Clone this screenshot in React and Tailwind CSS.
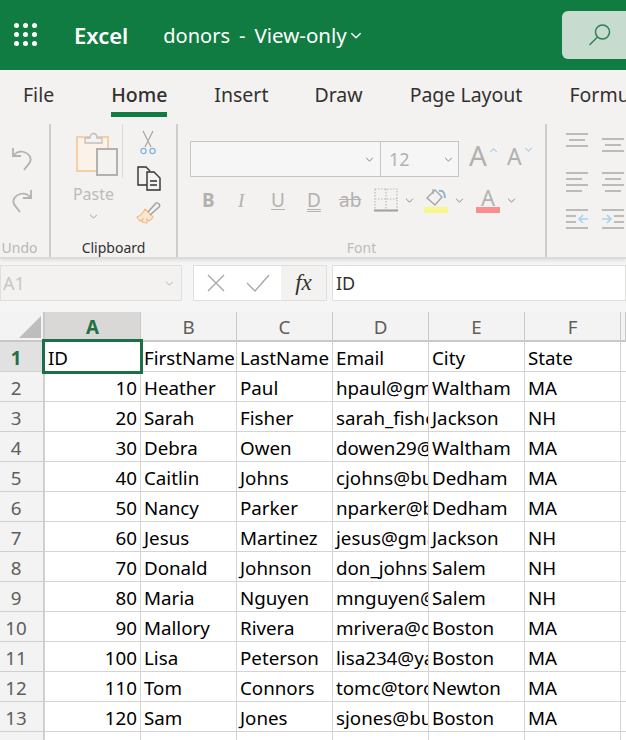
import React from 'react';

const font = { fontFamily: '"Noto Sans", "Open Sans", sans-serif' };

const rows = [
  ['ID', 'FirstName', 'LastName', 'Email', 'City', 'State'],
  [10, 'Heather', 'Paul', 'hpaul@gmail.com', 'Waltham', 'MA'],
  [20, 'Sarah', 'Fisher', 'sarah_fisher@aol.com', 'Jackson', 'NH'],
  [30, 'Debra', 'Owen', 'dowen29@gmail.com', 'Waltham', 'MA'],
  [40, 'Caitlin', 'Johns', 'cjohns@bu.edu', 'Dedham', 'MA'],
  [50, 'Nancy', 'Parker', 'nparker@bu.edu', 'Dedham', 'MA'],
  [60, 'Jesus', 'Martinez', 'jesus@gmail.com', 'Jackson', 'NH'],
  [70, 'Donald', 'Johnson', 'don_johnson@aol.com', 'Salem', 'NH'],
  [80, 'Maria', 'Nguyen', 'mnguyen@gmail.com', 'Salem', 'NH'],
  [90, 'Mallory', 'Rivera', 'mrivera@comcast.net', 'Boston', 'MA'],
  [100, 'Lisa', 'Peterson', 'lisa234@yahoo.com', 'Boston', 'MA'],
  [110, 'Tom', 'Connors', 'tomc@torch.com', 'Newton', 'MA'],
  [120, 'Sam', 'Jones', 'sjones@bu.edu', 'Boston', 'MA'],
  ['', '', '', '', '', ''],
];

function Chevron({ className = 'w-[10px] h-[6px]', color = '#8a8886' }) {
  return (
    <svg viewBox="0 0 10 6" className={className} fill="none" stroke={color} strokeWidth="1.2">
      <path d="M1 1l4 4 4-4" />
    </svg>
  );
}

function Lines({ widths, align = 'left' }) {
  return (
    <div className={`flex flex-col gap-[4px] w-[22px] ${align === 'center' ? 'items-center' : 'items-start'}`}>
      {widths.map((w, i) => (
        <div key={i} className="h-[2px] bg-[#bdbbb9]" style={{ width: w }} />
      ))}
    </div>
  );
}

function IndentIcon({ dir }) {
  const left = dir === 'left';
  return (
    <svg viewBox="0 0 22 22" className="w-[22px] h-[22px]" fill="none">
      <path d="M0 2h22M0 20h22" stroke="#bdbbb9" strokeWidth="2" />
      {left ? (
        <>
          <path d="M0 8h10M0 14h10" stroke="#bdbbb9" strokeWidth="2" />
          <path d="M13 11h9M17 7l-4 4 4 4" stroke="#a6d3ee" strokeWidth="1.6" />
        </>
      ) : (
        <>
          <path d="M12 8h10M12 14h10" stroke="#bdbbb9" strokeWidth="2" />
          <path d="M0 11h9M5 7l4 4-4 4" stroke="#a6d3ee" strokeWidth="1.6" />
        </>
      )}
    </svg>
  );
}

function UndoGroup() {
  return (
    <div className="w-[51px] border-r-2 border-[#cfcdcb] flex flex-col items-center">
      <svg viewBox="0 0 24 26" className="w-[24px] h-[26px] mt-[21px] mr-[6px]" fill="none" stroke="#b5b3b1" strokeWidth="1.8">
        <path d="M3 3v8h8" />
        <path d="M3 11c3-4 7-5 11-4 5 1.500 8 6 6 10-1 2-3 4-6 8" />
      </svg>
      <svg viewBox="0 0 24 26" className="w-[24px] h-[26px] mt-[16px] mr-[6px]" fill="none" stroke="#b5b3b1" strokeWidth="1.8">
        <path d="M21 3v8h-8" />
        <path d="M21 11c-3-4-7-5-11-4-5 1.500-8 6-6 10 1 2 3 4 6 8" />
      </svg>
      <span className="mt-auto leading-[18px] mr-[10px] text-[14px] text-[#b9b7b5]">Undo</span>
    </div>
  );
}

function ClipboardGroup() {
  return (
    <div className="w-[127px] border-r-2 border-[#cfcdcb] flex flex-col">
      <div className="flex h-[108px]">
        <div className="w-[71px] flex flex-col items-center pl-[14px] pt-[7px]">
          <svg viewBox="0 0 42 46" className="w-[42px] h-[46px] ml-[6px]" fill="none">
            <rect x="1" y="6" width="31" height="34" fill="#fbf3ea" stroke="#f2cfa5" strokeWidth="2" />
            <path d="M9 12V7h5c0-6 7-6 7 0h5v5z" fill="#f3f2f1" stroke="#c2c0be" strokeWidth="1.300" />
            <rect x="21" y="18" width="20" height="26" fill="#f3f2f1" stroke="#b3b1af" strokeWidth="2" />
          </svg>
          <span className="text-[16px] leading-[22px] text-[#bdbbb9] mt-[6px]">Paste</span>
          <Chevron className="w-[9px] h-[5px] mt-[9px]" color="#a19f9d" />
        </div>
        <div className="w-px h-[54px] bg-[#dddbd9]" />
        <div className="flex flex-col items-center w-[50px]">
          <svg viewBox="0 0 16 26" className="w-[16px] h-[26px] mt-[6px]" fill="none">
            <path d="M3 1l8 16M13 1L5 17" stroke="#a8a6a4" strokeWidth="1.200" />
            <circle cx="3.500" cy="21" r="2.600" stroke="#7fb6dd" strokeWidth="1.300" />
            <circle cx="12.500" cy="21" r="2.600" stroke="#7fb6dd" strokeWidth="1.300" />
          </svg>
          <svg viewBox="0 0 25 26" className="w-[25px] h-[26px] mt-[9px]" fill="none" stroke="#323130" strokeWidth="1.400">
            <path d="M11 20H2V2h8l4 4" />
            <path d="M11 7h7l6 6v12H11z" fill="#f3f2f1" />
            <path d="M14 16h7M14 20h7" />
          </svg>
          <svg viewBox="0 0 25 24" className="w-[25px] h-[24px] mt-[10px]" fill="none">
            <path d="M9 8l8 8c-1 2-2 3-4 4l-2-2 0 4c-2 0-3 0-5-1l1-3-3 2c-1-1-2-2-3-4 4-1 6-4 8-8z" fill="#fae6d2" stroke="#f0bd8e" strokeWidth="1.200" />
            <path d="M12 11l8-9c1-1 2 0 3 1s1 2 0 3l-9 8" stroke="#a19f9d" strokeWidth="1.400" />
          </svg>
        </div>
      </div>
      <span className="mt-auto leading-[18px] text-center text-[14px] text-[#323130]">Clipboard</span>
    </div>
  );
}

function FontGroup() {
  return (
    <div className="w-[369px] border-r-2 border-[#cfcdcb] flex flex-col pl-[12px]">
      <div className="flex items-center mt-[17px]">
        <div className="flex h-[36px] w-[269px] border border-[#c8c6c4] bg-[#f6f6f6]">
          <div className="w-[190px] border-r border-[#c8c6c4] flex items-center justify-end pr-[6px]">
            <Chevron className="w-[9px] h-[5px]" />
          </div>
          <div className="flex-1 flex items-center justify-between pl-[8px] pr-[5px] text-[18px] text-[#b3b1af]">
            12
            <Chevron className="w-[9px] h-[5px]" />
          </div>
        </div>
        <div className="relative ml-[10px] w-[27px] h-[28px] text-[28px] leading-[20px] text-[#b3b1af]">
          A
          <svg viewBox="0 0 10 6" className="absolute w-[9px] h-[5px] left-[20px] top-[3px]" fill="none" stroke="#a6d3ee" strokeWidth="1.400">
            <path d="M1 5l4-4 4 4" />
          </svg>
        </div>
        <div className="relative ml-[11px] w-[24px] h-[28px] text-[23px] leading-[22px] text-[#b3b1af]">
          A
          <svg viewBox="0 0 10 6" className="absolute w-[9px] h-[5px] left-[17px] top-[2px]" fill="none" stroke="#a6d3ee" strokeWidth="1.400">
            <path d="M1 1l4 4 4-4" />
          </svg>
        </div>
      </div>
      <div className="flex items-center h-[26px] mt-[10px] text-[#b3b1af]">
        <span className="w-[18px] ml-[12px] text-[19px] font-bold leading-none">B</span>
        <span className="w-[18px] ml-[18px] text-[19px] italic leading-none" style={{ fontFamily: '"Liberation Serif", serif' }}>I</span>
        <span className="w-[18px] ml-[15px] text-[19px] leading-none underline underline-offset-2">U</span>
        <span className="w-[18px] ml-[18px] text-[19px] leading-none underline decoration-double underline-offset-2">D</span>
        <span className="w-[26px] ml-[14px] text-[19px] leading-none line-through">ab</span>
        <svg viewBox="0 0 24 24" className="w-[24px] h-[24px] ml-[9px]" fill="none">
          <path d="M1 1h22v21M1 1v21M12 1v21M1 11h22" stroke="#bdbbb9" strokeWidth="1.200" strokeDasharray="1.500 1.500" />
          <path d="M0 22.500h24" stroke="#a19f9d" strokeWidth="2" />
        </svg>
        <Chevron className="w-[9px] h-[5px] ml-[7px]" />
        <div className="flex flex-col items-center w-[24px] ml-[10px]">
          <svg viewBox="0 0 24 19" className="w-[24px] h-[19px]" fill="none">
            <path d="M3 10l8-8 7 7-7 8z" stroke="#a8a6a4" strokeWidth="1.400" />
            <path d="M9 1v5" stroke="#a8a6a4" strokeWidth="1.200" />
            <path d="M15 3c4-1 6 2 6 7" stroke="#7fb6dd" strokeWidth="2" />
          </svg>
          <div className="w-[24px] h-[6px] bg-[#f8f78e]" />
        </div>
        <Chevron className="w-[9px] h-[5px] ml-[7px]" />
        <div className="flex flex-col items-center w-[24px] ml-[12px]">
          <span className="text-[22px] leading-[19px] h-[19px]">A</span>
          <div className="w-[24px] h-[6px] bg-[#fb8f8f]" />
        </div>
        <Chevron className="w-[9px] h-[5px] ml-[7px]" />
      </div>
      <span className="mt-auto leading-[18px] text-center text-[14px] text-[#bdbbb9] pr-[12px]">Font</span>
    </div>
  );
}

function AlignGroup() {
  return (
    <div className="flex gap-[14px] pl-[19px] pt-[9px]">
      <div className="flex flex-col items-start">
        <div className="h-[26px]"><Lines widths={[22, 16, 22]} align="center" /></div>
        <div className="h-[24px] mt-[13px]"><Lines widths={[22, 16, 22, 16]} /></div>
        <div className="mt-[12px]"><IndentIcon dir="left" /></div>
      </div>
      <div className="flex flex-col items-start">
        <div className="h-[26px] pt-[5px]"><Lines widths={[22, 16, 22]} align="center" /></div>
        <div className="h-[24px] mt-[13px]"><Lines widths={[22, 16, 22, 16]} align="center" /></div>
        <div className="mt-[12px]"><IndentIcon dir="right" /></div>
      </div>
    </div>
  );
}

export default function App() {
  return (
    <div className="w-[626px] h-[740px] overflow-hidden bg-white flex flex-col" style={font}>
      {/* Title bar */}
      <header className="h-[70px] shrink-0 bg-[#107c41] flex items-center text-white">
        <div className="grid grid-cols-3 gap-[4px] ml-[14px] w-[23px] mb-[2px]">
          {Array.from({ length: 9 }).map((_, i) => (
            <span key={i} className="w-[5px] h-[5px] rounded-full bg-white" />
          ))}
        </div>
        <span className="ml-[37px] text-[22px] font-semibold">Excel</span>
        <span className="ml-[35px] text-[20px] mt-[1px]">donors</span>
        <span className="ml-[9px] text-[20px] mt-[1px]">-</span>
        <span className="ml-[9px] text-[20.5px] mt-[1px]">View-only</span>
        <Chevron className="w-[12px] h-[7px] ml-[3px]" color="#ffffff" />
        <div className="ml-auto w-[64px] h-[48px] bg-[#c7dccf] rounded-l-[6px] flex items-center pl-[26px]">
          <svg viewBox="0 0 24 24" className="w-[24px] h-[24px]" fill="none" stroke="#2f7f57" strokeWidth="1.500">
            <circle cx="14.500" cy="9" r="7" />
            <path d="M9.500 14L1.500 22" />
          </svg>
        </div>
      </header>

      {/* Tabs */}
      <nav className="h-[50px] shrink-0 bg-[#f3f2f1] flex items-start pl-[23px] gap-[47px] text-[19.5px] text-[#323130] whitespace-nowrap">
        <span className="mr-[10px] mt-[10px]">File</span>
        <span className="relative mt-[10px] font-medium">
          Home
          <span className="absolute left-0 right-0 top-[32px] h-[5px] bg-[#107c41]" />
        </span>
        <span className="mt-[10px]">Insert</span>
        <span className="mt-[10px] ml-[-1px]">Draw</span>
        <span className="mt-[10px]">Page Layout</span>
        <span className="mt-[10px]">Formulas</span>
      </nav>

      {/* Ribbon */}
      <section className="relative z-10 h-[139px] shrink-0 bg-[#f3f2f1] flex pt-[4px] border-b-2 border-[#dcdbd9] shadow-[0_2px_3px_rgba(0,0,0,0.08)]">
        <UndoGroup />
        <ClipboardGroup />
        <FontGroup />
        <AlignGroup />
      </section>

      {/* Formula bar */}
      <div className="h-[53px] shrink-0 bg-[#f5f5f5] flex gap-[11px] pt-[6px] items-start">
        <div className="h-[36px] w-[182px] border border-[#e1dfdd] bg-[#f3f2f1] flex items-center justify-between pl-[2px] pr-[7px] text-[18px] text-[#c8c6c4]">
          A1
          <Chevron className="w-[9px] h-[5px]" color="#b3b1af" />
        </div>
        <div className="flex h-[36px] w-[134px] border border-[#e1dfdd] bg-white">
          <div className="flex-1 flex items-center gap-[21px] pl-[13px]">
            <svg viewBox="0 0 18 18" className="w-[18px] h-[18px]" fill="none" stroke="#a8a6a4" strokeWidth="1.300"><path d="M1 1l16 16M17 1L1 17" /></svg>
            <svg viewBox="0 0 24 18" className="w-[24px] h-[18px]" fill="none" stroke="#a8a6a4" strokeWidth="1.300"><path d="M1 9l8 8L23 1" /></svg>
          </div>
          <div className="w-[45px] bg-[#f3f2f1] flex items-center justify-center text-[23px] italic text-[#323130]" style={{ fontFamily: '"Liberation Serif", serif' }}>fx</div>
        </div>
        <div className="flex-1 h-[36px] ml-[-6px] border border-[#e1dfdd] bg-white flex items-center pl-[3px] text-[18px] text-[#323130]">ID</div>
      </div>

      {/* Sheet */}
      <div className="relative flex-1 overflow-hidden">
        <div className="grid grid-cols-[45px_96px_96px_96px_96px_96px_96px_auto] auto-rows-[30px] text-[18.75px] text-black">
          <div className="bg-[#f3f3f3] border-b-2 border-r-2 border-[#c8c8c8] relative">
            <div className="absolute left-[19px] top-[4px] w-0 h-0 border-l-[22px] border-l-transparent border-b-[22px] border-b-[#bdbdbd]" />
          </div>
          {['A', 'B', 'C', 'D', 'E', 'F', ''].map((c, i) => (
            <div key={i} className={`flex items-center justify-center pt-[3px] border-b-2 border-r border-[#c8c8c8] ${i === 0 ? 'bg-[#d9d8d6] text-[#1e7145] font-bold' : 'bg-[#f3f3f3] text-[#605e5c]'}`}>
              {c}
            </div>
          ))}
          {rows.map((row, r) => (
            <React.Fragment key={r}>
              <div className={`flex items-center justify-center pt-[3px] pr-[11px] border-b border-r-2 border-[#d0d0d0] ${r === 0 ? 'bg-[#e1e1e1] text-[#1e7145] font-bold' : 'bg-[#f3f3f3] text-[#605e5c]'}`}>
                {r < 13 ? r + 1 : ''}
              </div>
              {row.map((cell, c) => (
                <div key={c} className={`flex items-center overflow-hidden whitespace-nowrap border-b border-r border-[#d4d4d4] px-[3px] pt-[3px] ${typeof cell === 'number' ? 'justify-end' : ''}`}>
                  {cell}
                </div>
              ))}
              <div className="border-b border-[#d4d4d4]" />
            </React.Fragment>
          ))}
        </div>
        {/* selected cell */}
        <div className="absolute left-[42px] top-[27px] w-[101px] h-[35px] border-[3px] border-[#1f6e4a]" />
      </div>
    </div>
  );
}
